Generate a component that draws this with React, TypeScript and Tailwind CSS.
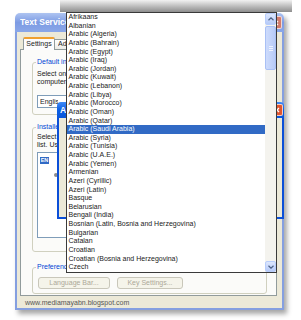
import React from 'react'

const languages = [
  'Afrikaans',
  'Albanian',
  'Arabic (Algeria)',
  'Arabic (Bahrain)',
  'Arabic (Egypt)',
  'Arabic (Iraq)',
  'Arabic (Jordan)',
  'Arabic (Kuwait)',
  'Arabic (Lebanon)',
  'Arabic (Libya)',
  'Arabic (Morocco)',
  'Arabic (Oman)',
  'Arabic (Qatar)',
  'Arabic (Saudi Arabia)',
  'Arabic (Syria)',
  'Arabic (Tunisia)',
  'Arabic (U.A.E.)',
  'Arabic (Yemen)',
  'Armenian',
  'Azeri (Cyrillic)',
  'Azeri (Latin)',
  'Basque',
  'Belarusian',
  'Bengali (India)',
  'Bosnian (Latin, Bosnia and Herzegovina)',
  'Bulgarian',
  'Catalan',
  'Croatian',
  'Croatian (Bosnia and Herzegovina)',
  'Czech',
]

const selected = 'Arabic (Saudi Arabia)'

function CloseButton({ active }: { active?: boolean }) {
  return (
    <div
      className={`flex items-center justify-center rounded-[2px] border border-white/70 ${
        active ? 'w-[12px] h-[12px] bg-[#e0552f]' : 'w-[13px] h-[13px] bg-[#d27b6c]'
      }`}
    >
      <svg width="6" height="6" viewBox="0 0 6 6">
        <path d="M1 1 L5 5 M5 1 L1 5" stroke="white" strokeWidth="1.3" />
      </svg>
    </div>
  )
}

function Chevron({ down }: { down?: boolean }) {
  return (
    <svg width="6" height="4" viewBox="0 0 6 4">
      <path d={down ? 'M0.5 0.8 L3 3.2 L5.5 0.8' : 'M0.5 3.2 L3 0.8 L5.5 3.2'} fill="none" stroke="#4d6185" strokeWidth="1.2" />
    </svg>
  )
}

// the parts of the settings window that the drop-down covers are clipped at its left edge
function SettingsWindow() {
  return (
    <div className="absolute left-[15px] top-[13px] w-[269px] h-[297px] flex flex-col rounded-t-[5px] shadow-[3px_4px_5px_rgba(0,0,0,0.35)]">
      {/* inactive title bar */}
      <div className="h-[19px] shrink-0 flex items-center justify-between pl-[5px] pr-[2px] rounded-t-[5px] bg-gradient-to-b from-[#aec4f1] via-[#7d9be3] to-[#8aa7e9]">
        <span className="w-[46px] overflow-hidden text-[8.5px] font-bold text-white whitespace-nowrap">Text Services and Input Languages</span>
        <CloseButton />
      </div>

      <div className="flex-1 flex flex-col bg-[#ece9d8] border-x-2 border-b-2 border-[#859fe0]">
        {/* tabs */}
        <div className="mt-[5px] ml-[3px] pl-[3px] h-[12px] flex items-end">
          <div className="relative z-10 mb-[-1px] w-[32px] h-[13px] flex items-center justify-center bg-[#fcfcfe] border-x border-[#919b9c] border-t-2 border-t-[#f0a030] rounded-t-[2px]">
            Settings
          </div>
          <div className="w-[40px] h-[10px] flex items-center pl-[3px] bg-gradient-to-b from-white to-[#ecebe6] border-t border-r border-[#919b9c] rounded-tr-[2px]">
            <span className="w-[8px] overflow-hidden whitespace-nowrap">Advanced</span>
          </div>
        </div>

        {/* tab panel */}
        <div className="ml-[3px] w-[257px] h-[247px] border border-[#919b9c] bg-[#fbfbf9] pl-[11px] pr-[9px] pt-[7px] flex flex-col">
          <fieldset className="h-[58px] border border-[#d0d0bf] rounded-[3px] pl-[3px]">
            <legend className="px-[1px] leading-[10px] text-[#0046d5]">
              <span className="block w-[29px] overflow-hidden whitespace-nowrap">Default input language</span>
            </legend>
            <div className="pl-[1px] mt-[2.5px] w-[30px] overflow-hidden leading-[8.7px] whitespace-nowrap">
              <div>Select one of the installed input languages to use when you start your</div>
              <div>computer.</div>
            </div>
            <div className="ml-[1px] mt-[8px] w-[150px] h-[13px] border border-[#7f9db9] bg-white pl-[2px] leading-[11px]">
              <span className="block w-[18px] overflow-hidden whitespace-nowrap">English (United States) - US</span>
            </div>
          </fieldset>

          <fieldset className="mt-[7px] h-[130px] border border-[#d0d0bf] rounded-[3px] pl-[3px]">
            <legend className="px-[1px] leading-[10px] text-[#0046d5]">
              <span className="block w-[29px] overflow-hidden whitespace-nowrap">Installed services</span>
            </legend>
            <div className="pl-[1px] mt-[0.5px] w-[30px] overflow-hidden leading-[8.5px] whitespace-nowrap">
              <div>Select the services that you want for each input language shown in the</div>
              <div>list. Use the Add and Remove buttons to modify this list.</div>
            </div>
            <div className="ml-[1px] mt-[2.5px] w-[225px] h-[86px] border border-[#7f9db9] bg-white pl-[2px] pt-[4px]">
              <div className="flex items-center h-[7px]">
                <span className="w-[9px] h-[7px] flex items-center justify-center bg-[#316ac5] text-white text-[5.5px] font-bold leading-none">
                  EN
                </span>
              </div>
              <div className="mt-[9px] pl-[14px] flex items-center">
                <span className="w-[4px] h-[4px] rounded-full bg-[#8c8c8c]" />
              </div>
            </div>
          </fieldset>

          <fieldset className="mt-[10px] h-[32px] border border-[#d0d0bf] rounded-[3px] pl-[3px]">
            <legend className="px-[1px] leading-[10px] text-[#0046d5]">
              <span className="block w-[29px] overflow-hidden whitespace-nowrap">Preferences</span>
            </legend>
            <div className="mt-[5px] ml-[2px] flex gap-[7px]">
              <div className="w-[72px] h-[12px] flex items-center justify-center rounded-[3px] border border-[#c9c7ba] bg-[#f5f4ea] text-[#aca899]">
                Language Bar...
              </div>
              <div className="w-[66px] h-[12px] flex items-center justify-center rounded-[3px] border border-[#c9c7ba] bg-[#f5f4ea] text-[#aca899]">
                Key Settings...
              </div>
            </div>
          </fieldset>
        </div>

        <div className="pl-[8px] pt-[1.5px] leading-[9px] text-[#555] whitespace-nowrap">www.mediamayabn.blogspot.com</div>
      </div>
    </div>
  )
}

function AddLanguageWindow() {
  return (
    <div className="absolute left-[57px] top-[102px] w-[227px] h-[117px] flex flex-col rounded-t-[4px]">
      <div className="h-[16px] shrink-0 flex items-center justify-between pl-[3px] pr-[1px] rounded-t-[4px] bg-gradient-to-b from-[#3d8af7] via-[#0a5fe5] to-[#0b56d9]">
        <span className="w-[6px] overflow-hidden text-[8.5px] font-bold text-white whitespace-nowrap">Add Input language</span>
        <CloseButton active />
      </div>
      <div className="flex-1 bg-[#ece9d8] border-x-2 border-b-2 border-[#0b4fd8]" />
    </div>
  )
}

function LanguageList() {
  return (
    <div className="absolute left-[66px] top-[12px] w-[211px] h-[261px] flex border border-[#3a3a3a] bg-white">
      <div className="flex-1 flex flex-col">
        {languages.map((name) => (
          <div
            key={name}
            className={`h-[8.63px] leading-[8.63px] pl-[1.5px] whitespace-nowrap ${
              name === selected ? 'bg-[#316ac5] text-white' : ''
            }`}
          >
            {name}
          </div>
        ))}
      </div>

      {/* scrollbar */}
      <div className="w-[11px] flex flex-col bg-[#f4f3ee]">
        <div className="h-[12px] flex items-center justify-center rounded-[2px] border border-[#b8cdfb] bg-gradient-to-b from-[#dde7fd] to-[#b6caf8]">
          <Chevron />
        </div>
        <div className="mt-[1px] h-[44px] flex flex-col items-center justify-center gap-[1px] rounded-[2px] border border-[#a9c0f5] bg-gradient-to-r from-[#cddbfc] to-[#b8cbf7]">
          <div className="w-[4px] h-[1px] bg-[#eef3fe]" />
          <div className="w-[4px] h-[1px] bg-[#eef3fe]" />
          <div className="w-[4px] h-[1px] bg-[#eef3fe]" />
        </div>
        <div className="flex-1" />
        <div className="h-[11px] flex items-center justify-center rounded-[2px] border border-[#b8cdfb] bg-gradient-to-b from-[#dde7fd] to-[#b6caf8]">
          <Chevron down />
        </div>
      </div>
    </div>
  )
}

export default function App() {
  return (
    <div className="relative w-[301px] h-[320px] overflow-hidden bg-white font-['Liberation_Sans',Arial,sans-serif] text-[7px] text-[#222]">
      {/* shadow strip above the drop-down */}
      <div className="absolute left-[60px] top-0 w-[232px] h-[12px] bg-gradient-to-b from-[#f2f2f2] to-[#8e8e8e]" />
      <SettingsWindow />
      <AddLanguageWindow />
      <LanguageList />
    </div>
  )
}
